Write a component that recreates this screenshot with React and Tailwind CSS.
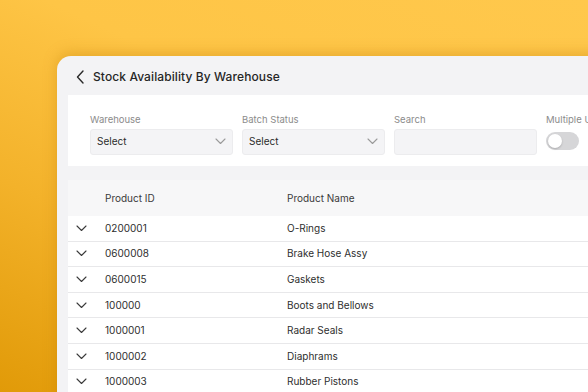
import React from "react";

const rows = [
  ["0200001", "O-Rings"],
  ["0600008", "Brake Hose Assy"],
  ["0600015", "Gaskets"],
  ["100000", "Boots and Bellows"],
  ["1000001", "Radar Seals"],
  ["1000002", "Diaphrams"],
  ["1000003", "Rubber Pistons"],
];

const ChevronDown = ({ className = "" }) => (
  <svg width="11" height="7" viewBox="0 0 11 7" fill="none" className={className}>
    <polyline points="1,1 5.5,5.5 10,1" stroke="currentColor" strokeWidth="1.1" strokeLinecap="round" strokeLinejoin="round" />
  </svg>
);

const SelectBox = ({ label }) => (
  <div className="flex flex-col w-[143px] shrink-0">
    <span className="text-[9.5px] text-[#8b8b8b] leading-none mb-[4px]">{label}</span>
    <div className="h-[26px] rounded-[3px] border border-[#ececee] bg-[#f4f4f6] flex items-center justify-between pl-[6px] pr-[6px]">
      <span className="text-[10px] text-[#2c2c2c]">Select</span>
      <ChevronDown className="text-[#9a9a9a]" />
    </div>
  </div>
);

export default function App() {
  return (
    <div
      className="w-[588px] h-[392px] overflow-hidden bg-[linear-gradient(205deg,#FFC84C_0%,#FEC546_38%,#F3B22A_68%,#E19A08_100%)] pl-[57px] pt-[56px]"
      style={{ fontFamily: "Inter, 'Noto Sans', sans-serif" }}
    >
      <div className="w-[620px] h-[400px] bg-[#f3f3f5] rounded-tl-[14px] shadow-[0_-3px_14px_rgba(190,120,0,0.35)] flex flex-col">
        {/* Title */}
        <div className="h-[39px] flex items-center pl-[19px] pt-[3px] gap-[8px]">
          <svg width="9" height="14" viewBox="0 0 9 14" fill="none">
            <polyline points="7,1 1.5,7 7,13" stroke="#2a2a2a" strokeWidth="1.4" strokeLinecap="round" strokeLinejoin="round" />
          </svg>
          <span className="text-[12px] font-medium text-[#262626] tracking-[0.1px]">Stock Availability By Warehouse</span>
        </div>

        {/* Filters */}
        <div className="ml-[11px] h-[71px] bg-white flex items-start gap-[9px] pl-[22px] pt-[20px]">
          <SelectBox label="Warehouse" />
          <SelectBox label="Batch Status" />
          <div className="flex flex-col w-[143px] shrink-0">
            <span className="text-[9.5px] text-[#8b8b8b] leading-none mb-[4px]">Search</span>
            <div className="h-[26px] rounded-[3px] border border-[#ececee] bg-[#f4f4f6]" />
          </div>
          <div className="flex flex-col shrink-0">
            <span className="text-[9.5px] text-[#8b8b8b] leading-none mb-[7px] whitespace-nowrap">Multiple UOM</span>
            <div className="w-[33px] h-[18px] rounded-full bg-[#d6d6d8] p-[2px] flex items-center">
              <div className="w-[14px] h-[14px] rounded-full bg-white shadow-[0_1px_2px_rgba(0,0,0,0.2)]" />
            </div>
          </div>
        </div>

        {/* Table */}
        <div className="ml-[11px] mt-[14px] flex flex-col">
          <div className="h-[36px] bg-[#f7f7f8] flex items-center text-[10px] text-[#3a3a3a]">
            <span className="w-[37px]" />
            <span className="w-[182px]">Product ID</span>
            <span>Product Name</span>
          </div>
          {rows.map(([id, name]) => (
            <div key={id} className="h-[25.6px] bg-white border-b-[1.5px] border-[#e8e8ea] flex items-center text-[10px] text-[#2e2e2e]">
              <span className="w-[37px] pl-[8px] flex items-center">
                <ChevronDown className="text-[#3a3a3a]" />
              </span>
              <span className="w-[182px]">{id}</span>
              <span>{name}</span>
            </div>
          ))}
        </div>
      </div>
    </div>
  );
}
